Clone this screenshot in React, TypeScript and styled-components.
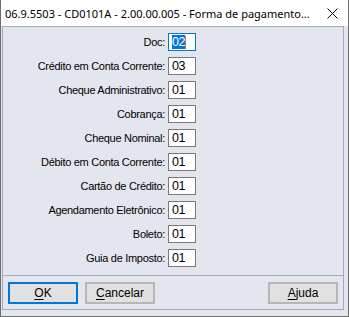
import React from 'react';
import styled, { createGlobalStyle } from 'styled-components';

const GlobalStyle = createGlobalStyle`
  html, body {
    margin: 0;
    padding: 0;
    background: #ffffff;
  }
  body {
    font-family: 'Liberation Sans', Arial, sans-serif;
  }
`;

const PANEL_BG = '#e3e6ef';
const FRAME_LINE = '#a3abbb';

const Window = styled.div`
  width: 349px;
  height: 317px;
  box-sizing: border-box;
  display: flex;
  flex-direction: column;
  border: 1px solid #6e6e6e;
  border-top: none;
  background: ${PANEL_BG};
`;

const TitleBar = styled.div`
  height: 26px;
  flex: none;
  display: flex;
  align-items: center;
  justify-content: space-between;
  padding: 0 10px 0 4px;
  background: #ffffff;
  font-family: 'Noto Sans', 'Liberation Sans', sans-serif;
  font-size: 11px;
  color: #000000;
`;

const TitleText = styled.span`
  white-space: nowrap;
`;

const Body = styled.div`
  flex: 1;
  display: flex;
  padding: 0 4px 6px 1px;
`;

const Frame = styled.div`
  flex: 1;
  display: flex;
  flex-direction: column;
  border: 1px solid ${FRAME_LINE};
`;

const FormGrid = styled.div`
  display: grid;
  grid-template-columns: 163px 28px;
  grid-auto-rows: 18px;
  column-gap: 2px;
  row-gap: 6px;
  padding: 6px 0 8px 0;
  border-bottom: 1px solid ${FRAME_LINE};
`;

const Label = styled.label`
  display: flex;
  align-items: center;
  justify-content: flex-end;
  padding-right: 1px;
  font-size: 11px;
  letter-spacing: -0.3px;
  color: #000000;
  white-space: nowrap;
`;

const Field = styled.div<{ $focused?: boolean }>`
  box-sizing: border-box;
  height: 18px;
  display: flex;
  align-items: center;
  padding-left: 3px;
  background: #ffffff;
  border: 1px solid ${(p) => (p.$focused ? '#0078d7' : '#7a7a7a')};
  font-size: 12.5px;
  letter-spacing: -0.4px;
  color: #000000;
`;

const Selected = styled.span`
  background: #0078d7;
  color: #ffffff;
  line-height: 14px;
`;

const Caret = styled.span`
  display: inline-block;
  width: 1px;
  height: 13px;
  background: #e07020;
`;

const ButtonBar = styled.div`
  flex: 1;
  display: flex;
  align-items: flex-start;
  gap: 7px;
  padding: 6px 5px 0 5px;
`;

const Button = styled.button<{ $primary?: boolean }>`
  box-sizing: border-box;
  width: 70px;
  height: 22px;
  padding: 0;
  background: #e1e1e1;
  border: 2px solid ${(p) => (p.$primary ? '#0078d7' : '#b6b6b6')};
  font-family: 'Liberation Sans', Arial, sans-serif;
  font-size: 12px;
  color: #000000;

  & u {
    text-decoration-thickness: 1px;
    text-underline-offset: 2px;
  }
`;

const Spacer = styled.div`
  flex: 1;
`;

const CloseIcon = () => (
  <svg width="11" height="11" viewBox="0 0 11 11">
    <path d="M0.5 0.5 L10.5 10.5 M10.5 0.5 L0.5 10.5" stroke="#000" strokeWidth="1" />
  </svg>
);

const rows: [string, string][] = [
  ['Crédito em Conta Corrente:', '03'],
  ['Cheque Administrativo:', '01'],
  ['Cobrança:', '01'],
  ['Cheque Nominal:', '01'],
  ['Débito em Conta Corrente:', '01'],
  ['Cartão de Crédito:', '01'],
  ['Agendamento Eletrônico:', '01'],
  ['Boleto:', '01'],
  ['Guia de Imposto:', '01'],
];

const App: React.FC = () => {
  return (
    <>
      <GlobalStyle />
      <Window>
        <TitleBar>
          <TitleText>06.9.5503 - CD0101A - 2.00.00.005 - Forma de pagamento...</TitleText>
          <CloseIcon />
        </TitleBar>
        <Body>
          <Frame>
            <FormGrid>
              <Label>Doc:</Label>
              <Field $focused>
                <Selected>02</Selected>
                <Caret />
              </Field>
              {rows.map(([label, value]) => (
                <React.Fragment key={label}>
                  <Label>{label}</Label>
                  <Field>{value}</Field>
                </React.Fragment>
              ))}
            </FormGrid>
            <ButtonBar>
              <Button $primary>
                <u>O</u>K
              </Button>
              <Button>
                <u>C</u>ancelar
              </Button>
              <Spacer />
              <Button>
                <u>A</u>juda
              </Button>
            </ButtonBar>
          </Frame>
        </Body>
      </Window>
    </>
  );
};

export default App;
